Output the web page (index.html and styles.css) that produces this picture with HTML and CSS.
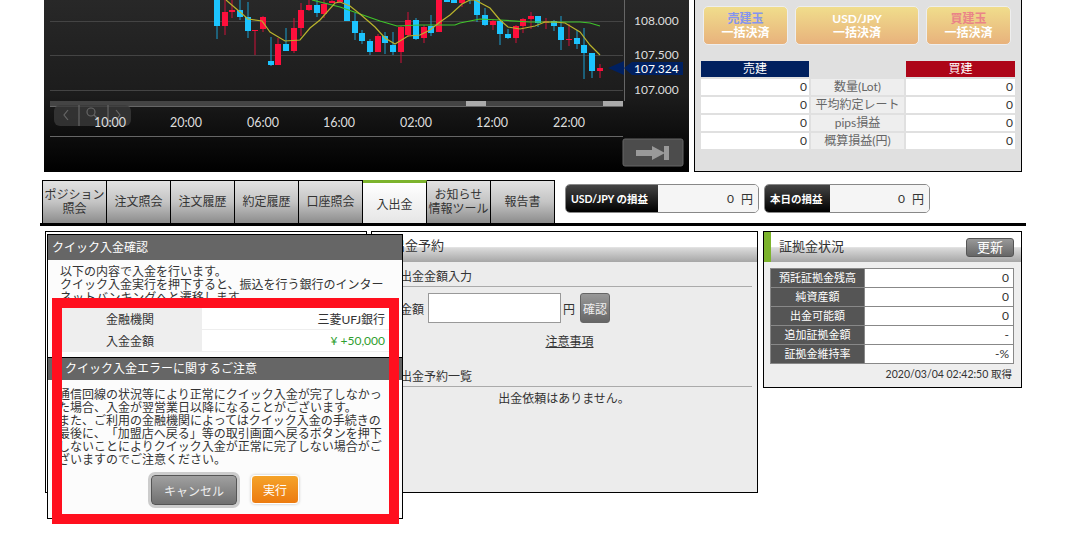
FILE: index.html
```html
<!DOCTYPE html>
<html lang="ja">
<head>
  <meta charset="UTF-8" />
  <title>クイック入金確認</title>
  <link rel="stylesheet" href="styles.css">
</head>
<body>
  <div class="top-row">
    <div class="chart">
      <svg class="chart-svg" width="645" height="172" viewBox="44 0 645 172">
        <path class="grid" d="M50 21.5H623M50 55.5H623M50 90.5H623" />
        <path class="axis" d="M624.5 0V101M50 106.5H623M50 136.5H623" />
        <rect class="scroll" x="50" y="101" width="573" height="5" />
        <rect class="thumb" x="466" y="101" width="20" height="5" />
        <rect class="thumb" x="603" y="101" width="20" height="5" />

        <path class="wick-up" d="M217 0V39M240 0V20M248 2V38M271 37V66M286 28V51M317 0V17M355 13V40M362 30V44M370 39V55M385 32V54M393 32V55M416 18V40M431 15V36M470 0V4M477 15V22M485 8V26M500 21V45M508 29V39M538 16V27M554 20V31M561 16V50M577 30V49M584 28V79M592 53V78" />
        <path class="body-up" d="M214 0h6v26h-6zM237 10h6v7h-6zM245 17h6v14h-6zM268 61h6v4h-6zM283 44h6v7h-6zM314 5h6v8h-6zM344 0h6v21h-6zM352 21h6v12h-6zM359 33h6v8h-6zM367 41h6v11h-6zM382 36h6v7h-6zM390 45h6v7h-6zM413 20h6v19h-6zM428 26h6v7h-6zM444 0h6v2h-6zM451 0h6v3h-6zM474 0h6v15h-6zM482 15h6v10h-6zM497 21h6v13h-6zM505 34h6v4h-6zM535 16h6v7h-6zM551 21h6v5h-6zM558 27h6v13h-6zM574 38h6v6h-6zM581 45h6v8h-6zM589 53h6v18h-6z" />
        <path class="wick-down" d="M225 0V35M232 0V18M255 30V55M263 16V32M278 38V65M294 18V53M301 3V36M309 0V11M324 0V18M332 0V3M378 34V52M401 26V63M408 12V37M424 25V43M462 0V7M493 19V30M516 25V43M523 18V33M531 12V29M546 18V29M569 24V46M600 64V78" />
        <path class="body-down" d="M222 12h6v14h-6zM229 10h6v2h-6zM252 30h6v1h-6zM260 17h6v12h-6zM275 44h6v21h-6zM291 28h6v23h-6zM298 10h6v18h-6zM306 5h6v5h-6zM321 4h6v10h-6zM329 1h6v2h-6zM337 0h6v2h-6zM375 36h6v16h-6zM398 27h6v25h-6zM405 20h6v15h-6zM421 27h6v11h-6zM436 0h6v32h-6zM459 0h6v3h-6zM490 21h6v4h-6zM513 26h6v12h-6zM520 19h6v7h-6zM528 16h6v3h-6zM543 21h6v2h-6zM566 39h6v1h-6zM597 68h6v3h-6z" />

        <polyline class="ma-long" points="312,0 340,7 360,14 380,21 397,26 420,25 455,25 460,23 475,20 480,19 500,20 530,22 580,22 590,23 600,26" />
        <polyline class="ma-short" points="226,0 240,12 248,19 262,21 270,32 285,41 300,40 310,28 320,20 335,3 340,2 350,6 360,14 375,27 385,38 395,44 408,36 420,35 430,30 440,22 450,15 462,4 470,0 475,0 490,8 500,20 508,27 520,29 535,26 545,22 555,22 565,23 580,32 590,45 600,55" />

        <rect class="zoom-bar" x="54" y="105" width="77" height="21" rx="6" />
        <path class="zoom-icon" d="M79 105V126M108 105V126M68 110l-4 5 4 5M116 110l4 5-4 5" />
        <circle class="zoom-icon" cx="91" cy="112" r="4" />
        <path class="zoom-icon" d="M94 115l3 3" />

        <text class="time" x="110" y="127">10:00</text>
        <text class="time" x="186" y="127">20:00</text>
        <text class="time" x="263" y="127">06:00</text>
        <text class="time" x="339" y="127">16:00</text>
        <text class="time" x="416" y="127">02:00</text>
        <text class="time" x="492" y="127">12:00</text>
        <text class="time" x="569" y="127">22:00</text>

        <text class="price" x="634" y="25">108.000</text>
        <text class="price" x="634" y="59">107.500</text>
        <text class="price" x="634" y="94">107.000</text>
        <path class="marker" d="M608 68L624 61V75ZM624 68L632 62H683V75H632Z" />
        <text class="price price-now" x="634" y="73">107.324</text>

        <rect class="end-btn" x="623" y="139" width="60" height="27" rx="2" />
        <path class="end-arrow" d="M636 150h16v-4l13 7-13 7v-4h-16zM664 146h5v14h-5z" />
      </svg>
    </div>

    <div class="order-panel">
      <div class="settle-row">
        <button class="settle-btn settle-side"><span class="sell-text">売建玉</span><br>一括決済</button>
        <button class="settle-btn settle-all">USD/JPY<br>一括決済</button>
        <button class="settle-btn settle-side"><span class="buy-text">買建玉</span><br>一括決済</button>
      </div>
      <div class="position-grid">
        <div class="head-sell">売建</div><div></div><div class="head-buy">買建</div>
        <div class="num">0</div><div class="label">数量(Lot)</div><div class="num">0</div>
        <div class="num">0</div><div class="label">平均約定レート</div><div class="num">0</div>
        <div class="num">0</div><div class="label">pips損益</div><div class="num">0</div>
        <div class="num">0</div><div class="label">概算損益(円)</div><div class="num">0</div>
      </div>
    </div>
  </div>

  <div class="tab-row">
    <div class="tabs">
      <div class="tab">ポジション<br>照会</div>
      <div class="tab">注文照会</div>
      <div class="tab">注文履歴</div>
      <div class="tab">約定履歴</div>
      <div class="tab">口座照会</div>
      <div class="tab active">入出金</div>
      <div class="tab">お知らせ<br>情報ツール</div>
      <div class="tab">報告書</div>
    </div>
    <div class="loss-box loss-pair">
      <div class="loss-label">USD/JPY の損益</div>
      <div class="loss-value">0 <span>円</span></div>
    </div>
    <div class="loss-box loss-day">
      <div class="loss-label">本日の損益</div>
      <div class="loss-value">0 <span>円</span></div>
    </div>
  </div>
  <div class="rule"></div>

  <div class="panels">
    <div class="panel panel-left"></div>

    <div class="panel panel-withdraw">
      <div class="panel-title">出金予約</div>
      <div class="panel-body">
        <div class="section-title">出金金額入力</div>
        <div class="amount-row">
          <span class="amount-label">金額</span>
          <input class="amount-input" type="text">
          <span>円</span>
          <button class="confirm-btn">確認</button>
        </div>
        <div class="notes-link"><a href="#">注意事項</a></div>
        <div class="section-title list-title">出金予約一覧</div>
        <div class="empty-msg">出金依頼はありません。</div>
      </div>
    </div>

    <div class="panel panel-margin">
      <div class="margin-title">
        <span>証拠金状況</span>
        <button class="refresh-btn">更新</button>
      </div>
      <div class="margin-body">
        <table class="margin-table">
          <tr><th>預託証拠金残高</th><td>0</td></tr>
          <tr><th>純資産額</th><td>0</td></tr>
          <tr><th>出金可能額</th><td>0</td></tr>
          <tr><th>追加証拠金額</th><td>-</td></tr>
          <tr><th>証拠金維持率</th><td>-%</td></tr>
        </table>
        <div class="margin-date">2020/03/04 02:42:50 取得</div>
      </div>
    </div>

    <div class="dialog">
      <div class="dialog-title">クイック入金確認</div>
      <div class="dialog-text">以下の内容で入金を行います。<br>クイック入金実行を押下すると、振込を行う銀行のインターネットバンキングへと遷移します。</div>
      <table class="quick-table">
        <tr><th>金融機関</th><td>三菱UFJ銀行</td></tr>
        <tr><th>入金金額</th><td class="amount">¥ +50,000</td></tr>
      </table>
      <div class="dialog-title notice-title">クイック入金エラーに関するご注意</div>
      <div class="notice-text">通信回線の状況等により正常にクイック入金が完了しなかった場合、入金が翌営業日以降になることがございます。<br>また、ご利用の金融機関によってはクイック入金の手続きの最後に、「加盟店へ戻る」等の取引画面へ戻るボタンを押下しないことによりクイック入金が正常に完了しない場合がございますのでご注意ください。</div>
      <div class="dialog-buttons">
        <button class="cancel-btn">キャンセル</button>
        <button class="run-btn">実行</button>
      </div>
    </div>
    <div class="highlight"></div>
  </div>
</body>
</html>
```

FILE: styles.css
```css
body {
  margin: 0;
  background: #ffffff;
  color: #333;
  font-family: Lato, "Noto Sans CJK JP", sans-serif;
  font-size: 12px;
  text-spacing-trim: space-all;
}

button {
  font-family: inherit;
  cursor: pointer;
}

/* top: chart + order panel */
.top-row {
  display: flex;
  gap: 5px;
  padding-left: 44px;
  height: 172px;
}

.chart {
  width: 645px;
  height: 172px;
  background: linear-gradient(#282828, #1c1c1c 55%, #000000);
}

.chart-svg {
  display: block;
}

.grid { stroke: #444; stroke-width: 1; fill: none; }
.axis { stroke: #666; stroke-width: 1; fill: none; }
.scroll { fill: #444; }
.thumb { fill: #aaa; }

.wick-up { stroke: #1b9fd0; stroke-width: 1; fill: none; }
.body-up { fill: #1cc4ff; }
.wick-down { stroke: #d01038; stroke-width: 1; fill: none; }
.body-down { fill: #ff0f3c; }
.ma-long { stroke: #3fc42a; stroke-width: 1.2; fill: none; }
.ma-short { stroke: #b9b32c; stroke-width: 1.2; fill: none; }

.zoom-bar { fill: #3a3a3a; fill-opacity: 0.8; }
.zoom-icon { stroke: #666; stroke-width: 1.2; fill: none; }

.time {
  fill: #ddd;
  font-size: 12.5px;
  text-anchor: middle;
}

.price {
  fill: #ddd;
  font-size: 12px;
}

.price-now { fill: #fff; }
.marker { fill: #002060; }
.end-btn { fill: #4c4c4c; stroke: #666; }
.end-arrow { fill: #999; }

.order-panel {
  width: 328px;
  height: 172px;
  box-sizing: border-box;
  background: #e0e0e0;
  border: 1px solid #000;
  border-top: none;
  padding: 6px 6px 0;
}

.settle-row {
  display: flex;
  gap: 7px;
  margin-left: 2px;
}

.settle-btn {
  height: 39px;
  padding: 0;
  border: 1px solid #eee;
  border-radius: 5px;
  background: linear-gradient(#f0dd8c, #e8b27c);
  color: #fff;
  font-size: 12px;
  font-weight: 700;
  line-height: 14px;
}

.settle-side { width: 85px; }
.settle-all { width: 124px; }
.sell-text { color: #8595ee; }
.buy-text { color: #ea8488; }

.position-grid {
  display: grid;
  grid-template-columns: 108px 93px 109px;
  grid-auto-rows: 16px;
  gap: 2px;
  margin-top: 16px;
  line-height: 16px;
  text-align: center;
}

.head-sell { background: #00205f; color: #fff; }
.head-buy { background: #ad0518; color: #fff; }
.num { background: #fff; text-align: right; padding-right: 2px; }
.label { background: #eee; color: #666; white-space: nowrap; }

/* tabs */
.tab-row {
  display: flex;
  height: 43px;
  margin-top: 8px;
  padding-left: 42px;
}

.tabs {
  display: flex;
  width: 513px;
  border-left: 1px solid #000;
  border-top: 1px solid #000;
  box-sizing: border-box;
}

.tab {
  width: 63px;
  flex: none;
  display: flex;
  align-items: center;
  justify-content: center;
  text-align: center;
  line-height: 14px;
  border-right: 1px solid #000;
  background: linear-gradient(#e2e2e2, #c4c4c4 50%, #8c8c8c);
}

.tab.active {
  background: linear-gradient(#fff, #e6e6e6);
  border-top: 3px solid #7cb32c;
  margin-top: -1px;
  padding-top: 4px;
  box-sizing: content-box;
}

.loss-box {
  display: flex;
  height: 29px;
  margin-top: 4px;
  border-radius: 5px;
  overflow: hidden;
  border: 1px solid #888;
  box-sizing: border-box;
}

.loss-pair { width: 194px; margin-left: 10px; }
.loss-day { width: 166px; margin-left: 5px; }

.loss-label {
  display: flex;
  align-items: center;
  padding-left: 5px;
  background: linear-gradient(#444, #000);
  color: #fff;
  font-size: 10.5px;
  font-weight: 700;
  white-space: nowrap;
}

.loss-pair .loss-label { width: 87px; }
.loss-day .loss-label { width: 60px; }

.loss-value {
  flex: 1;
  display: flex;
  align-items: center;
  justify-content: flex-end;
  gap: 7px;
  padding-right: 5px;
  background: #f5f5f5;
}

.rule {
  height: 3px;
  margin: 0 39px 0 40px;
  background: #000;
}

/* lower panels */
.panels {
  position: relative;
  display: flex;
  align-items: flex-start;
  height: 317px;
  margin: 5px 0 0 45px;
}

.panel {
  box-sizing: border-box;
  border: 1px solid #000;
  background: #fff;
}

.panel-left {
  width: 322px;
  height: 262px;
}

.panel-withdraw {
  width: 387px;
  height: 262px;
  margin-left: 4px;
  display: flex;
  flex-direction: column;
}

.panel-title {
  height: 30px;
  box-sizing: border-box;
  padding: 3px 0 0 20px;
  font-size: 13px;
  background: linear-gradient(#fff 50%, #dcdcdc 52%, #a6a6a6);
}

.panel-body {
  flex: 1;
  background: #ececec;
  padding: 6px 5px 0 28px;
}

.section-title {
  border-bottom: 1px solid #aaa;
  line-height: 18px;
  height: 18px;
}

.amount-row {
  display: flex;
  align-items: center;
  height: 30px;
  margin-top: 6px;
}

.amount-label { width: 28px; }

.amount-input {
  box-sizing: border-box;
  width: 133px;
  height: 30px;
  margin: 0 2px 0 0;
  padding: 0;
  border: 1px solid #999;
  background: #fff;
}

.confirm-btn {
  width: 30px;
  height: 30px;
  margin-left: 5px;
  padding: 0;
  border: 1px solid #666;
  border-radius: 3px;
  background: linear-gradient(#999, #666);
  color: #eee;
  font-size: 12px;
}

.notes-link {
  margin: 10px 0 0;
  text-align: center;
  padding-right: 13px;
  line-height: 17px;
}

.notes-link a { color: #333; }

.list-title { margin-top: 18px; }

.empty-msg {
  text-align: center;
  padding-right: 24px;
  line-height: 17px;
  margin-top: 3px;
}

.panel-margin {
  width: 259px;
  height: 157px;
  margin-left: 5px;
  background: #eee;
}

.margin-title {
  display: flex;
  justify-content: space-between;
  align-items: center;
  height: 30px;
  box-sizing: border-box;
  padding: 0 7px 0 8px;
  border-left: 7px solid #7cb32c;
  font-size: 13px;
  background: linear-gradient(#fff 50%, #dcdcdc 52%, #a6a6a6);
}

.margin-title span { margin-bottom: 4px; }

.refresh-btn {
  width: 48px;
  height: 19px;
  padding: 0;
  border: 1px solid #555;
  border-radius: 3px;
  background: linear-gradient(#999, #666);
  color: #fff;
  font-size: 13px;
  line-height: 16px;
}

.margin-body {
  padding: 6px 7px 0 6px;
}

.margin-table {
  width: 244px;
  border-collapse: collapse;
}

.margin-table th,
.margin-table td {
  height: 18px;
  padding: 0;
  border: 1px solid #888;
  line-height: 18px;
}

.margin-table th {
  width: 93px;
  background: #555;
  color: #fff;
  font-size: 11px;
  font-weight: 400;
}

.margin-table td {
  background: #fff;
  text-align: right;
  padding-right: 4px;
}

.margin-date {
  text-align: right;
  padding-right: 2px;
  margin-top: 3px;
  font-size: 10.5px;
  line-height: 14px;
}

/* dialog overlay */
.dialog {
  position: absolute;
  left: 2px;
  top: 3px;
  width: 356px;
  height: 285px;
  box-sizing: border-box;
  border: 1px solid #000;
  background: #fcfcfc;
}

.dialog-title {
  height: 25px;
  box-sizing: border-box;
  padding-left: 4px;
  line-height: 25px;
  background: #666;
  color: #fff;
}

.dialog-text {
  padding: 5px 15px 0 12px;
  height: 43px;
  line-height: 13px;
  overflow: hidden;
}

.quick-table {
  width: 337px;
  margin-left: 10px;
  border-collapse: collapse;
  border-bottom: 1px solid #000;
}

.quick-table th,
.quick-table td {
  height: 21px;
  padding: 0;
  border-bottom: 1px solid #eee;
  font-weight: 400;
}

.quick-table th {
  width: 144px;
  background: #eee;
  text-align: center;
}

.quick-table td {
  background: #fff;
  text-align: right;
  padding-right: 10px;
}

.quick-table .amount { color: #2f9e2f; }

.notice-title {
  height: 23px;
  margin-top: 5px;
  padding-left: 17px;
  border-top: 1px solid #000;
  line-height: 22px;
}

.notice-text {
  width: 326px;
  margin: 8px 0 0 10px;
  line-height: 13px;
}

.dialog-buttons {
  display: flex;
  justify-content: center;
  gap: 14px;
  margin-top: 9px;
}

.cancel-btn {
  width: 86px;
  height: 30px;
  padding: 0;
  border: 1px solid #555;
  border-radius: 4px;
  background: linear-gradient(#a0a0a0, #707070);
  box-shadow: 0 0 0 3px #ccc;
  color: #eee;
  font-size: 12px;
}

.run-btn {
  width: 48px;
  height: 29px;
  padding: 0;
  border: 1px solid #fff;
  border-radius: 4px;
  background: linear-gradient(#f5a32a, #ec7b10);
  box-shadow: 0 0 3px #bbb;
  color: #fff;
  font-size: 12px;
}

.highlight {
  position: absolute;
  left: 7px;
  top: 67px;
  width: 347px;
  height: 226px;
  box-sizing: border-box;
  border: 10px solid #ff0f1e;
}
```
